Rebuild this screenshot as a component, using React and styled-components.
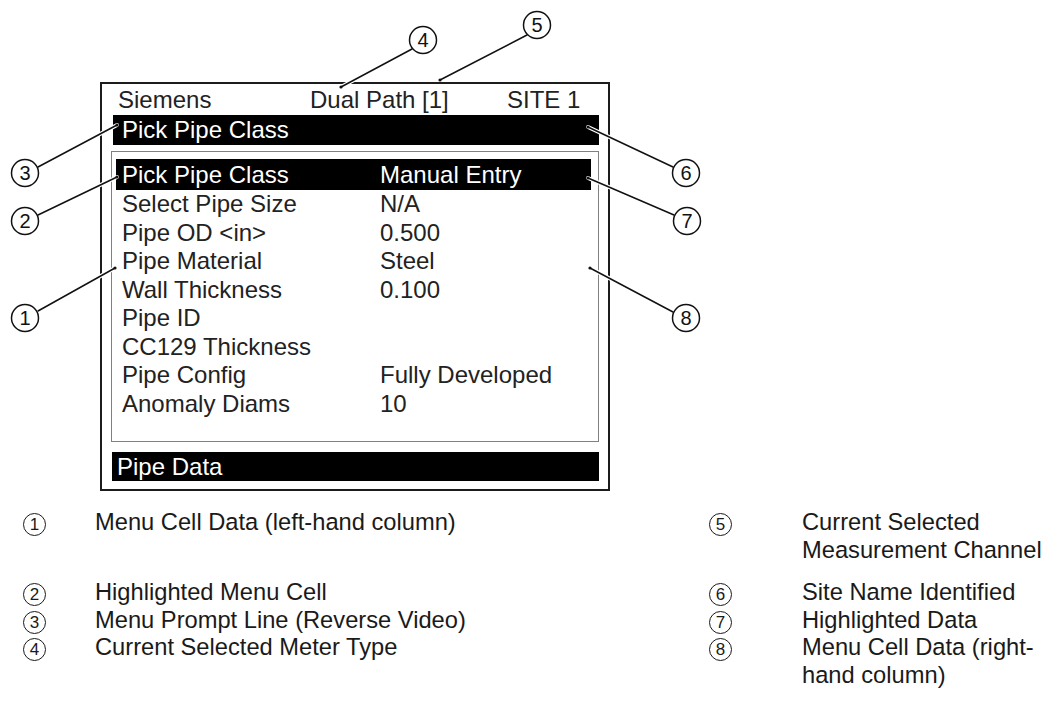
import React from 'react';
import styled, { createGlobalStyle } from 'styled-components';

const GlobalStyle = createGlobalStyle`
  html, body {
    margin: 0;
    padding: 0;
    background: #fff;
  }
  body {
    font-family: "Liberation Sans", Arial, sans-serif;
    color: #1c1c1c;
  }
`;

const Page = styled.div`
  width: 1064px;
  height: 714px;
  overflow: hidden;
`;

const Figure = styled.div`
  position: relative;
  height: 491px;
  padding-top: 82px;
  box-sizing: border-box;
`;

const Callouts = styled.svg`
  position: absolute;
  top: 0;
  left: 0;
  pointer-events: none;
`;

const Device = styled.div`
  margin-left: 100px;
  width: 510px;
  height: 409px;
  box-sizing: border-box;
  border: 2px solid #1c1c1c;
  padding: 0 9px 8px 9px;
  display: flex;
  flex-direction: column;
  font-size: 24px;
  color: #222;
`;

const Header = styled.div`
  display: grid;
  grid-template-columns: 192px 197px auto;
  padding-left: 7px;
  height: 31px;
  line-height: 31px;
  white-space: nowrap;
`;

const Bar = styled.div`
  background: #000;
  color: #fff;
  height: ${p => p.$h}px;
  line-height: ${p => p.$h}px;
  margin-left: ${p => p.$indent}px;
  padding-left: ${p => p.$pad}px;
  white-space: nowrap;
`;

const MenuBox = styled.div`
  margin-top: 6px;
  height: 291px;
  box-sizing: border-box;
  border: 1.5px solid #808080;
  padding: 7px 7px 0 4px;
  margin-bottom: 10px;
`;

const Row = styled.div`
  display: grid;
  grid-template-columns: 258px 1fr;
  padding-left: 6px;
  height: ${p => (p.$active ? 31 : 28.5)}px;
  line-height: ${p => (p.$active ? 31 : 28.5)}px;
  background: ${p => (p.$active ? '#000' : 'transparent')};
  color: ${p => (p.$active ? '#fff' : '#222')};
  white-space: nowrap;
`;

const Legend = styled.div`
  display: grid;
  grid-template-columns: 72px 614px 93px 250px;
  padding: 18px 0 0 23px;
  font-size: 23.7px;
  line-height: 27.5px;
  color: #1a1a1a;
`;

const Cell = styled.div`
  padding-bottom: ${p => (p.$gap ? 15 : 0)}px;
`;

const Num = styled.span`
  display: inline-flex;
  align-items: center;
  justify-content: center;
  width: 23px;
  height: 23px;
  margin-top: 2px;
  box-sizing: border-box;
  border: 1.8px solid #1a1a1a;
  border-radius: 50%;
  font-size: 17px;
  line-height: 1;
`;

const menu = [
  ['Pick Pipe Class', 'Manual Entry'],
  ['Select Pipe Size', 'N/A'],
  ['Pipe OD <in>', '0.500'],
  ['Pipe Material', 'Steel'],
  ['Wall Thickness', '0.100'],
  ['Pipe ID', ''],
  ['CC129 Thickness', ''],
  ['Pipe Config', 'Fully Developed'],
  ['Anomaly Diams', '10'],
];

// circle centre, then leader line from -> to
const callouts = [
  { n: 1, cx: 25, cy: 318, x1: 38, y1: 311, x2: 115, y2: 268 },
  { n: 2, cx: 25, cy: 221, x1: 38, y1: 215, x2: 117, y2: 177 },
  { n: 3, cx: 25, cy: 173, x1: 38, y1: 167, x2: 117, y2: 125 },
  { n: 4, cx: 423, cy: 40, x1: 412, y1: 49, x2: 341, y2: 87 },
  { n: 5, cx: 537, cy: 25, x1: 527, y1: 35, x2: 440, y2: 80 },
  { n: 6, cx: 686, cy: 173, x1: 673, y1: 167, x2: 588, y2: 127 },
  { n: 7, cx: 687, cy: 221, x1: 674, y1: 215, x2: 588, y2: 178 },
  { n: 8, cx: 686, cy: 318, x1: 673, y1: 312, x2: 590, y2: 268 },
];

const legend = [
  [1, 'Menu Cell Data (left-hand column)', 5, 'Current Selected Measurement Channel'],
  [2, 'Highlighted Menu Cell', 6, 'Site Name Identified'],
  [3, 'Menu Prompt Line (Reverse Video)', 7, 'Highlighted Data'],
  [4, 'Current Selected Meter Type', 8, 'Menu Cell Data (right-hand column)'],
];

function App() {
  return (
    <Page>
      <GlobalStyle />
      <Figure>
        <Device>
          <Header>
            <span>Siemens</span>
            <span>Dual Path [1]</span>
            <span>SITE 1</span>
          </Header>
          <Bar $h={30} $indent={2} $pad={9}>Pick Pipe Class</Bar>
          <MenuBox>
            {menu.map(([label, value], i) => (
              <Row key={label} $active={i === 0}>
                <span>{label}</span>
                <span>{value}</span>
              </Row>
            ))}
          </MenuBox>
          <Bar $h={29} $indent={1} $pad={5}>Pipe Data</Bar>
        </Device>
        <Callouts width="1064" height="491" viewBox="0 0 1064 491">
          {callouts.map(c => (
            <g key={c.n}>
              <line x1={c.x1} y1={c.y1} x2={c.x2} y2={c.y2} stroke="#fff" strokeWidth="4" strokeLinecap="round" />
              <line x1={c.x1} y1={c.y1} x2={c.x2} y2={c.y2} stroke="#111" strokeWidth="1.5" strokeLinecap="round" />
              <circle cx={c.x2} cy={c.y2} r="1.6" fill="#111" />
              <circle cx={c.cx} cy={c.cy} r="13.5" fill="#fff" stroke="#111" strokeWidth="1.5" />
              <text x={c.cx} y={c.cy + 7} textAnchor="middle" fontSize="20" fontFamily="Liberation Sans, Arial, sans-serif" fill="#111">{c.n}</text>
            </g>
          ))}
        </Callouts>
      </Figure>
      <Legend>
        {legend.map(([a, textA, b, textB], i) => (
          <React.Fragment key={a}>
            <Cell $gap={i === 0}><Num>{a}</Num></Cell>
            <Cell $gap={i === 0}>{textA}</Cell>
            <Cell $gap={i === 0}><Num>{b}</Num></Cell>
            <Cell $gap={i === 0}>{textB}</Cell>
          </React.Fragment>
        ))}
      </Legend>
    </Page>
  );
}

export default App;
